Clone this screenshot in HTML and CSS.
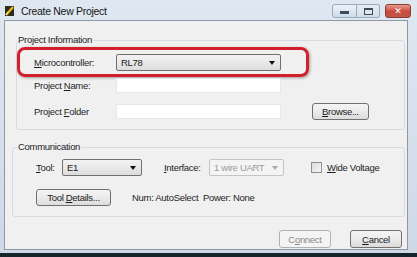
FILE: index.html
```html
<!DOCTYPE html>
<html lang="en">
<head>
    <meta charset="UTF-8">
    <title>Create New Project</title>
    <link rel="stylesheet" href="styles.css">
</head>
<body>
    <div class="window">
        <div class="titlebar">
            <svg class="app-icon" width="9" height="10" viewBox="0 0 9 10">
                <rect x="0" y="0" width="9" height="10" fill="#2b2b1e"/>
                <path d="M1 9 L8 1" stroke="#e8c21c" stroke-width="2.2"/>
                <path d="M1 9 L3 6" stroke="#fff39a" stroke-width="1"/>
            </svg>
            <span class="title">Create New Project</span>
            <div class="caption-buttons">
                <div class="cap cap-min"><span class="dash"></span></div>
                <div class="cap cap-max"><span class="box"></span></div>
                <div class="cap cap-close">&#x2715;</div>
            </div>
        </div>

        <div class="client">
            <fieldset class="group group-project">
                <legend>Project Information</legend>

                <div class="highlight">
                    <label><u>M</u>icrocontroller:</label>
                    <div class="select">RL78<span class="arrow"></span></div>
                </div>

                <div class="row">
                    <label>Project <u>N</u>ame:</label>
                    <div class="textbox"></div>
                </div>

                <div class="row row-folder">
                    <label>Project <u>F</u>older</label>
                    <div class="textbox"></div>
                    <button class="btn btn-browse"><u>B</u>rowse...</button>
                </div>
            </fieldset>

            <fieldset class="group group-comm">
                <legend>Communication</legend>

                <div class="comm-row">
                    <label class="lbl-tool"><u>T</u>ool:</label>
                    <div class="select select-tool">E1<span class="arrow"></span></div>
                    <label class="lbl-iface"><u>I</u>nterface:</label>
                    <div class="select select-iface disabled">1 wire UART<span class="arrow"></span></div>
                    <span class="checkbox"></span>
                    <label class="lbl-wide"><u>W</u>ide Voltage</label>
                </div>

                <div class="comm-row comm-row2">
                    <button class="btn btn-details">Tool <u>D</u>etails...</button>
                    <span class="status">Num: AutoSelect&nbsp; Power: None</span>
                </div>
            </fieldset>

            <div class="footer">
                <button class="btn disabled">C<u>o</u>nnect</button>
                <button class="btn"><u>C</u>ancel</button>
            </div>
        </div>
    </div>
</body>
</html>
```

FILE: styles.css
```css
* {
    box-sizing: border-box;
}
body {
    margin: 0;
    width: 417px;
    height: 257px;
    overflow: hidden;
    font-family: "Liberation Sans", Arial, sans-serif;
    font-size: 9.5px;
    letter-spacing: -0.3px;
    color: #1e1e1e;
}
u {
    text-decoration-thickness: 1px;
    text-underline-offset: 1px;
}
.window {
    height: 257px;
    display: flex;
    flex-direction: column;
    background: linear-gradient(#dfe8f1, #cdd9e5);
    border-bottom: 4px solid #16252c;
}

/* title bar */
.titlebar {
    height: 20px;
    display: flex;
    align-items: center;
    padding: 2px 0 0 5px;
}
.app-icon {
    flex: none;
}
.title {
    font-size: 10.5px;
    margin-left: 7px;
    color: #151515;
}
.caption-buttons {
    margin-left: auto;
    margin-right: 6px;
    display: flex;
    align-items: center;
}
.cap {
    height: 14px;
    display: flex;
    align-items: center;
    justify-content: center;
    border: 1px solid #9aabbd;
}
.cap-min {
    width: 25px;
    border-radius: 3px 0 0 3px;
    background: linear-gradient(#eef3f9, #cddbe9);
}
.cap-max {
    width: 23px;
    border-left: none;
    border-radius: 0 3px 3px 0;
    background: linear-gradient(#e6edf4, #d3dde7);
}
.cap-close {
    width: 26px;
    margin-left: 5px;
    border-radius: 3px;
    border-color: #8e3a31;
    background: linear-gradient(#e39a8e, #c9493c 55%, #c0574a);
    color: #fff;
    font-size: 9px;
    font-weight: bold;
    font-family: "DejaVu Sans", sans-serif;
    letter-spacing: 0;
}
.dash {
    width: 9px;
    height: 3px;
    background: #3c4a5a;
    margin-top: 3px;
}
.box {
    width: 9px;
    height: 7px;
    border: 1px solid #3c4a5a;
    border-top-width: 2px;
}

/* client area */
.client {
    flex: 1;
    margin: 0 9px 3px 4px;
    background: #f0f0f0;
    border: 1px solid #8d9aa6;
    display: flex;
    flex-direction: column;
}
.group {
    border: 1px solid #d5dbe0;
    border-radius: 3px;
    padding: 0;
    min-width: 0;
}
.group legend {
    padding: 0 1px;
    line-height: 12px;
    color: #1e1e1e;
}
.group-project {
    margin: 13px 2px 0 11px;
    padding-bottom: 9px;
}
.group-comm {
    margin: 11px 2px 0 7px;
    padding-bottom: 10px;
}
.group-comm legend {
    margin-left: 4px;
}

.highlight {
    width: 292px;
    height: 30px;
    margin-top: 1px;
    padding-left: 14px;
    display: grid;
    grid-template-columns: 82px 165px;
    align-items: center;
    border: 3px solid #d1202b;
    border-radius: 8px;
    box-shadow: 1px 1px 3px rgba(0, 0, 0, 0.35);
}
.row {
    display: grid;
    grid-template-columns: 82px 165px auto;
    align-items: center;
    padding-left: 17px;
    margin-top: 1px;
    height: 15px;
}
.row-folder {
    margin-top: 9px;
    height: 18px;
}
.textbox {
    height: 15px;
    background: #fff;
    border: 1px solid #e4e8ec;
}

.select {
    position: relative;
    height: 17px;
    line-height: 15px;
    padding-left: 4px;
    border: 1px solid #707070;
    border-radius: 2px;
    background: linear-gradient(#f3f3f3, #e9e9e9 50%, #dcdcdc);
    color: #1a1a1a;
}
.arrow {
    position: absolute;
    right: 5px;
    top: 6px;
    border-left: 3px solid transparent;
    border-right: 3px solid transparent;
    border-top: 4px solid #111;
}
.select.disabled {
    border-color: #c5c5c5;
    background: #f4f4f4;
    color: #9a9a9a;
}
.select.disabled .arrow {
    border-top-color: #a8a8a8;
}

.btn {
    height: 17px;
    padding: 0;
    font: inherit;
    letter-spacing: inherit;
    color: #1a1a1a;
    border: 1px solid #707070;
    border-radius: 3px;
    background: linear-gradient(#f4f4f4, #ebebeb 50%, #dcdcdc);
}
.btn.disabled {
    border-color: #adb2b5;
    background: #f4f4f4;
    color: #8a8a8a;
}
.btn-browse {
    width: 57px;
    margin-left: 31px;
}

.comm-row {
    display: flex;
    align-items: center;
    height: 17px;
    margin-top: 6px;
    padding-left: 23px;
}
.lbl-tool {
    width: 26px;
}
.select-tool {
    width: 80px;
}
.lbl-iface {
    width: 45px;
    margin-left: 22px;
}
.select-iface {
    width: 75px;
}
.checkbox {
    width: 11px;
    height: 11px;
    margin-left: 27px;
    border: 1px solid #8e8f8f;
    background: linear-gradient(135deg, #dcdcdc, #f7f7f7);
}
.lbl-wide {
    margin-left: 5px;
}
.comm-row2 {
    margin-top: 13px;
}
.btn-details {
    width: 75px;
}
.status {
    margin-left: 21px;
}

.footer {
    display: flex;
    justify-content: flex-end;
    gap: 19px;
    margin-top: 13px;
    padding-right: 5px;
}
.footer .btn {
    width: 52px;
    height: 18px;
}
```
